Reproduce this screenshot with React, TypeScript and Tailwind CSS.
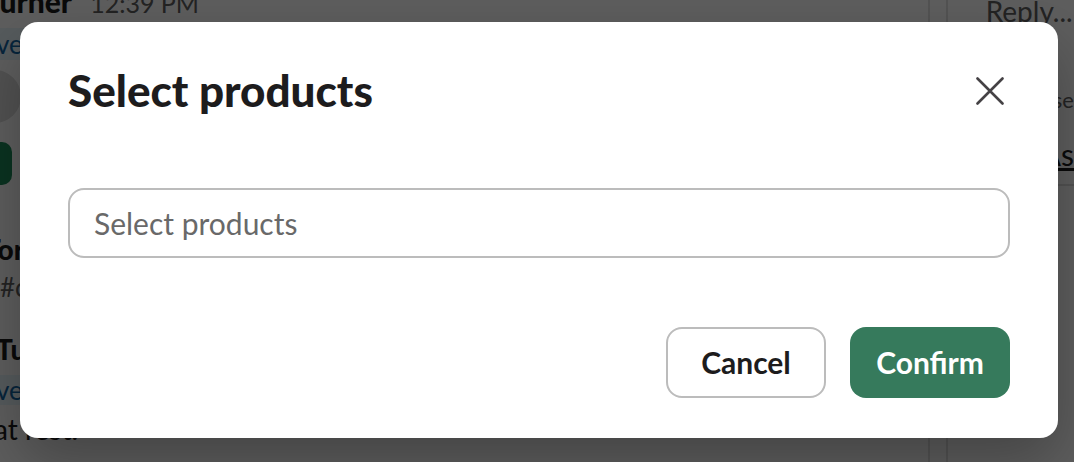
function SlackPage() {
  return (
    <div className="flex h-full">
      <div className="flex-1 overflow-hidden">
        <div className="-mt-[14px] flex h-[30px] items-baseline gap-[18px] whitespace-nowrap leading-[30px]">
          <span className="-ml-[16px] text-[30px] font-black text-[#1d1c1d]">Turner</span>
          <span className="text-[25px] text-[#616061]">12:39 PM</span>
        </div>
        <div className="mt-[12px] h-[32px] bg-[#eaf6fd] text-[26px] leading-[32px] text-[#1264a3]">
          <span className="-ml-[4px]">ve</span>
        </div>
        <div className="mt-[10px] -ml-[32px] h-[53px] w-[53px] rounded-full bg-[#dddddd]" />
        <div className="mt-[19px] -ml-[28px] h-[43px] w-[40px] rounded-[10px] bg-[#1d8a5a]" />
        <div className="mt-[50px] -ml-[16px] h-[28px] text-[28px] font-black leading-[28px] text-[#1d1c1d]">Tor</div>
        <div className="mt-[11px] h-[26px] text-[26px] leading-[26px] text-[#616061]">#c</div>
        <div className="mt-[35px] -ml-[4px] h-[28px] text-[28px] font-black leading-[28px] text-[#1d1c1d]">Tu</div>
        <div className="mt-[12px] h-[30px] bg-[#eaf6fd] text-[26px] leading-[30px] text-[#1264a3]">
          <span className="-ml-[4px]">ve</span>
        </div>
        <div className="mt-[10px] h-[28px] whitespace-nowrap text-[28px] leading-[28px] text-[#1d1c1d]">
          <span className="-ml-[6px]">at rest.</span>
        </div>
      </div>
      <div className="flex w-[146px] border-l-2 border-[#e2e2e2]">
        <div className="w-[32px]" />
        <div className="flex-1 border-l-2 border-[#e2e2e2]">
          <div className="-mt-[4px] h-[30px] whitespace-nowrap pl-[38px] text-[28px] leading-[30px] text-[#616061]">Reply...</div>
          <div className="mt-[62px] h-[24px] pl-[105px] text-[22px] leading-[24px] text-[#616061]">se</div>
          <div className="mt-[24px] pl-[93px] text-[30px] leading-[36px] text-[#1d1c1d] underline">As</div>
          <div className="mt-[12px] ml-[90px] h-[2px] bg-[#dddddd]" />
        </div>
      </div>
    </div>
  )
}

function CloseIcon() {
  return (
    <svg width="28" height="28" viewBox="0 0 28 28" fill="none">
      <path d="M1.5 1.5L26.5 26.5M26.5 1.5L1.5 26.5" stroke="#454245" strokeWidth="2.6" strokeLinecap="round" />
    </svg>
  )
}

function SelectModal() {
  return (
    <div className="flex h-[416px] w-[1038px] flex-col rounded-[18px] bg-white px-[48px] pt-[42px] pb-[40px] shadow-[0_24px_60px_rgba(0,0,0,0.28)]">
      <div className="flex items-start justify-between">
        <h1 className="text-[44px] font-black leading-[53px] text-[#1d1c1d]">Select products</h1>
        <button className="mt-[13px] mr-[6px]">
          <CloseIcon />
        </button>
      </div>
      <div className="mt-[71px] flex h-[70px] items-center rounded-[16px] border-2 border-[#bcbcbc] pl-[24px] text-[30px] text-[#696969]">
        Select products
      </div>
      <div className="mt-auto flex justify-end gap-[24px]">
        <button className="h-[71px] w-[160px] rounded-[16px] border-2 border-[#bcbcbc] bg-white text-[30px] font-bold text-[#1d1c1d]">
          Cancel
        </button>
        <button className="h-[71px] w-[160px] rounded-[16px] bg-[#367a5c] text-[30px] font-bold text-white">
          Confirm
        </button>
      </div>
    </div>
  )
}

export default function App() {
  return (
    <div className="relative h-[462px] w-[1074px] overflow-hidden bg-white font-['Lato',sans-serif]">
      <SlackPage />
      <div className="absolute inset-0 bg-black/[0.63]" />
      <div className="absolute inset-0 pl-[20px] pt-[22px]">
        <SelectModal />
      </div>
    </div>
  )
}
